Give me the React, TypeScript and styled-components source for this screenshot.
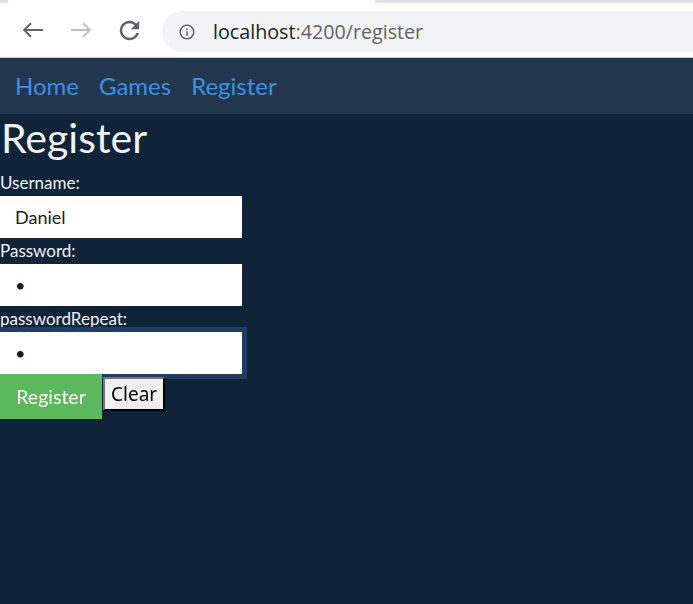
import styled, { createGlobalStyle } from 'styled-components';

const GlobalStyle = createGlobalStyle`
    html, body {
        margin: 0;
        padding: 0;
        background-color: #0f2339;
    }
    * {
        box-sizing: border-box;
    }
`;

const Window = styled.div`
    height: 100vh;
    display: flex;
    flex-direction: column;
    overflow: hidden;
`;

// browser chrome
const Chrome = styled.div`
    flex: none;
    background-color: #ffffff;
    border-bottom: 1px solid #c7cbd1;
`;
const TabStrip = styled.div`
    height: 3px;
    display: flex;
    background-color: #dee1e6;
`;
const ActiveTab = styled.div`
    margin-left: 8px;
    width: 367px;
    background-color: #ffffff;
`;
const Toolbar = styled.div`
    height: 54px;
    display: flex;
    align-items: center;
    padding-left: 18px;
`;
const NavIcon = styled.div`
    width: 30px;
    height: 30px;
    margin-right: 18px;
    display: flex;
    align-items: center;
    justify-content: center;
`;
const Omnibox = styled.div`
    flex: 1;
    height: 41px;
    margin-right: -30px;
    margin-top: 3px;
    padding-left: 16px;
    border-radius: 21px;
    background-color: #f1f3f4;
    display: flex;
    align-items: center;
`;
const Url = styled.span`
    margin-left: 17px;
    font-family: 'Open Sans', 'Noto Sans', sans-serif;
    font-size: 19.7px;
    color: #202124;
`;
const UrlRest = styled.span`
    color: #5f6368;
`;

const BackIcon = ({ color }: { color: string }) => (
    <svg width="22" height="16" viewBox="0 0 22 16" fill="none" stroke={color} strokeWidth="2">
        <path d="M21 8H2.5" />
        <path d="M9 1.2L2.2 8 9 14.8" />
    </svg>
);
const ForwardIcon = ({ color }: { color: string }) => (
    <svg width="22" height="16" viewBox="0 0 22 16" fill="none" stroke={color} strokeWidth="2">
        <path d="M1 8h18.5" />
        <path d="M13 1.2L19.8 8 13 14.8" />
    </svg>
);
const ReloadIcon = () => (
    <svg width="29" height="29" viewBox="0 0 24 24" fill="#5f6368">
        <path d="M17.65 6.35C16.2 4.9 14.21 4 12 4c-4.42 0-7.99 3.58-7.99 8s3.57 8 7.99 8c3.73 0 6.84-2.55 7.73-6h-2.08c-.82 2.33-3.04 4-5.65 4-3.31 0-6-2.69-6-6s2.69-6 6-6c1.66 0 3.14.69 4.22 1.78L13 11h7V4l-2.35 2.35z" />
    </svg>
);
const InfoIcon = () => (
    <svg width="18" height="18" viewBox="0 0 24 24" fill="#5f6368">
        <path d="M11 7h2v2h-2zm0 4h2v6h-2zm1-9C6.48 2 2 6.48 2 12s4.48 10 10 10 10-4.48 10-10S17.52 2 12 2zm0 18c-4.41 0-8-3.59-8-8s3.59-8 8-8 8 3.59 8 8-3.59 8-8 8z" />
    </svg>
);

const BrowserBar = () => {
    return (
        <Chrome>
            <TabStrip><ActiveTab /></TabStrip>
            <Toolbar>
                <NavIcon><BackIcon color="#5f6368" /></NavIcon>
                <NavIcon><ForwardIcon color="#bdc1c6" /></NavIcon>
                <NavIcon><ReloadIcon /></NavIcon>
                <Omnibox>
                    <InfoIcon />
                    <Url>localhost<UrlRest>:4200/register</UrlRest></Url>
                </Omnibox>
            </Toolbar>
        </Chrome>
    )
}

// app
const Page = styled.div`
    flex: 1;
    background-color: #0f2339;
    font-family: Lato, 'Liberation Sans', sans-serif;
    color: #f2f2f2;
`;
const NavBar = styled.nav`
    height: 56px;
    padding-left: 15px;
    padding-bottom: 2px;
    display: flex;
    align-items: center;
    gap: 20px;
    background-color: #22374e;
`;
const NavLink = styled.a`
    font-size: 24px;
    color: #3d8fe3;
    text-decoration: none;
    cursor: pointer;
`;
const Title = styled.h1`
    margin: 0;
    padding-left: 1px;
    font-size: 41px;
    font-weight: normal;
    line-height: 48px;
`;
const Form = styled.form`
    margin-top: 12px;
    display: flex;
    flex-direction: column;
    align-items: flex-start;
`;
const Label = styled.label`
    font-size: 17px;
    line-height: 26px;
    margin-top: -4px;
`;
const Input = styled.input<{ $focused?: boolean }>`
    width: 242px;
    height: 42px;
    margin-bottom: 4px;
    padding: 0 15px;
    border: 0;
    outline: ${(props) => props.$focused ? '5px solid #1e3d60' : 'none'};
    background-color: #ffffff;
    font-family: Lato, 'Liberation Sans', sans-serif;
    font-size: 18px;
    color: #1a1a1a;
    caret-color: #000000;
    &:focus {
        outline: ${(props) => props.$focused ? '5px solid #1e3d60' : 'none'};
    }
`;
const Buttons = styled.div`
    display: flex;
    align-items: flex-start;
    margin-top: -4px;
`;
const Submit = styled.button`
    width: 102px;
    height: 45px;
    padding: 0;
    border: 0;
    background-color: #5cb85c;
    font-family: Lato, 'Liberation Sans', sans-serif;
    font-size: 19.5px;
    color: #ffffff;
    cursor: pointer;
`;
const ClearButton = styled.button`
    margin-top: 3px;
    margin-left: 1px;
    height: 34px;
    padding: 0 6px;
    border: 2px outset #767676;
    border-right-color: #333333;
    border-bottom-color: #333333;
    background-color: #efefef;
    font-family: 'Noto Sans', 'Open Sans', sans-serif;
    font-size: 19px;
    color: #000000;
    cursor: pointer;
`;

const App = () => {
    return (
        <Window>
            <GlobalStyle />
            <BrowserBar />
            <Page>
                <NavBar>
                    <NavLink>Home</NavLink>
                    <NavLink>Games</NavLink>
                    <NavLink>Register</NavLink>
                </NavBar>
                <Title>Register</Title>
                <Form onSubmit={(e) => e.preventDefault()}>
                    <Label>Username:</Label>
                    <Input type="text" defaultValue="Daniel" />
                    <Label>Password:</Label>
                    <Input type="password" defaultValue="a" />
                    <Label>passwordRepeat:</Label>
                    <Input type="password" defaultValue="a" $focused autoFocus />
                    <Buttons>
                        <Submit type="submit">Register</Submit>
                        <ClearButton type="button">Clear</ClearButton>
                    </Buttons>
                </Form>
            </Page>
        </Window>
    );
};

export default App;
